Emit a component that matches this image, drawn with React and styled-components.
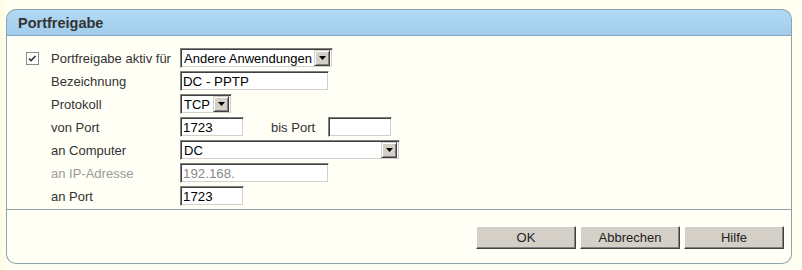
import styled, { createGlobalStyle } from "styled-components";

const GlobalStyle = createGlobalStyle`
  html, body {
    margin: 0;
    padding: 0;
    background: linear-gradient(to right, #fffbe0 0, #fffff2 6px);
    font-family: "Liberation Sans", Arial, sans-serif;
  }
`;

const Page = styled.div`
  padding: 9px 10px 7px 6px;
`;

const Panel = styled.div`
  width: 786px;
`;

const Header = styled.div`
  height: 25px;
  border: 1px solid #8fa3ab;
  border-bottom-color: #86a6bd;
  border-radius: 10px 10px 0 0;
  background: linear-gradient(#b0d9f5, #a2cdeb);
  display: flex;
  align-items: center;
  padding-left: 11px;
  font-size: 14.5px;
  font-weight: bold;
  color: #333;
`;

const Body = styled.div`
  background: #fffff5;
  border: 1px solid #8fa3ab;
  border-top: none;
  border-radius: 0 0 10px 10px;
`;

const Form = styled.div`
  display: grid;
  grid-template-columns: 26px 129px 1fr;
  grid-auto-rows: 20px;
  row-gap: 3px;
  align-items: center;
  padding: 12px 0 3px 18px;
  border-bottom: 1px solid #8fa3ab;
`;

const Label = styled.div`
  grid-column: 2;
  font-size: 13px;
  color: ${(p) => (p.$muted ? "#9a9a9a" : "#333")};
`;

const Field = styled.div`
  grid-column: 3;
  display: flex;
  align-items: center;
  height: 20px;
`;

const CheckCell = styled.div`
  grid-column: 1;
  display: flex;
  align-items: center;
  padding-left: 1px;
`;

const TextBox = styled.input`
  box-sizing: border-box;
  width: ${(p) => p.$w}px;
  height: 20px;
  margin: 0;
  padding: 0 2px;
  border: 1px solid;
  border-color: #808080 #ffffff #ffffff #808080;
  box-shadow: inset 1px 1px 0 #404040, inset -1px -1px 0 #d4d0c8;
  background: #fff;
  font-family: "Liberation Sans", Arial, sans-serif;
  font-size: 13.3px;
  color: ${(p) => (p.disabled ? "#8a8a8a" : "#000")};
  outline: none;
`;

const SelectBox = styled.div`
  box-sizing: border-box;
  width: ${(p) => p.$w}px;
  height: 20px;
  display: flex;
  align-items: center;
  border: 1px solid;
  border-color: #808080 #ffffff #ffffff #808080;
  box-shadow: inset 1px 1px 0 #404040, inset -1px -1px 0 #d4d0c8;
  background: #fff;
  padding: 2px 2px 2px 3px;
  font-size: 13px;
  color: #000;
`;

const SelectValue = styled.span`
  flex: 1;
  white-space: nowrap;
  overflow: hidden;
`;

const ArrowButton = styled.div`
  box-sizing: border-box;
  flex: none;
  width: 16px;
  height: 16px;
  background: #d4d0c8;
  border: 1px solid;
  border-color: #d4d0c8 #404040 #404040 #d4d0c8;
  box-shadow: inset 1px 1px 0 #fff, inset -1px -1px 0 #808080;
  display: flex;
  align-items: center;
  justify-content: center;
`;

const SideLabel = styled.span`
  font-size: 13px;
  color: #333;
  margin: 0 13px 0 27px;
`;

const Buttons = styled.div`
  display: flex;
  justify-content: flex-end;
  gap: 4px;
  padding: 16px 7px 14px 0;
`;

const Button = styled.button`
  box-sizing: border-box;
  width: 100px;
  height: 23px;
  margin: 0;
  padding: 0;
  background: #d4d0c8;
  border: 1px solid;
  border-color: #ffffff #404040 #404040 #ffffff;
  box-shadow: inset -1px -1px 0 #808080;
  font-family: "Liberation Sans", Arial, sans-serif;
  font-size: 13px;
  color: #222;
`;

const Arrow = () => (
  <ArrowButton>
    <svg width="7" height="4" viewBox="0 0 7 4">
      <path d="M0 0h7L3.5 4z" fill="#000" />
    </svg>
  </ArrowButton>
);

const Select = ({ w, value }) => (
  <SelectBox $w={w}>
    <SelectValue>{value}</SelectValue>
    <Arrow />
  </SelectBox>
);

const CheckBox = () => (
  <svg width="13" height="13" viewBox="0 0 13 13">
    <rect x="0.5" y="0.5" width="12" height="12" fill="#fff" stroke="#8a8a8a" />
    <path d="M3 6.5l2 2 4.5-4.5" fill="none" stroke="#333" strokeWidth="1.6" />
  </svg>
);

export default function App() {
  return (
    <>
      <GlobalStyle />
      <Page>
        <Panel>
          <Header>Portfreigabe</Header>
          <Body>
            <Form>
              <CheckCell>
                <CheckBox />
              </CheckCell>
              <Label>Portfreigabe aktiv für</Label>
              <Field>
                <Select w={153} value="Andere Anwendungen" />
              </Field>

              <Label>Bezeichnung</Label>
              <Field>
                <TextBox $w={149} readOnly defaultValue="DC - PPTP" />
              </Field>

              <Label>Protokoll</Label>
              <Field>
                <Select w={52} value="TCP" />
              </Field>

              <Label>von Port</Label>
              <Field>
                <TextBox $w={64} readOnly defaultValue="1723" />
                <SideLabel>bis Port</SideLabel>
                <TextBox $w={64} readOnly defaultValue="" />
              </Field>

              <Label>an Computer</Label>
              <Field>
                <Select w={220} value="DC" />
              </Field>

              <Label $muted>an IP-Adresse</Label>
              <Field>
                <TextBox $w={149} disabled defaultValue="192.168." />
              </Field>

              <Label>an Port</Label>
              <Field>
                <TextBox $w={64} readOnly defaultValue="1723" />
              </Field>
            </Form>
            <Buttons>
              <Button>OK</Button>
              <Button>Abbrechen</Button>
              <Button>Hilfe</Button>
            </Buttons>
          </Body>
        </Panel>
      </Page>
    </>
  );
}
